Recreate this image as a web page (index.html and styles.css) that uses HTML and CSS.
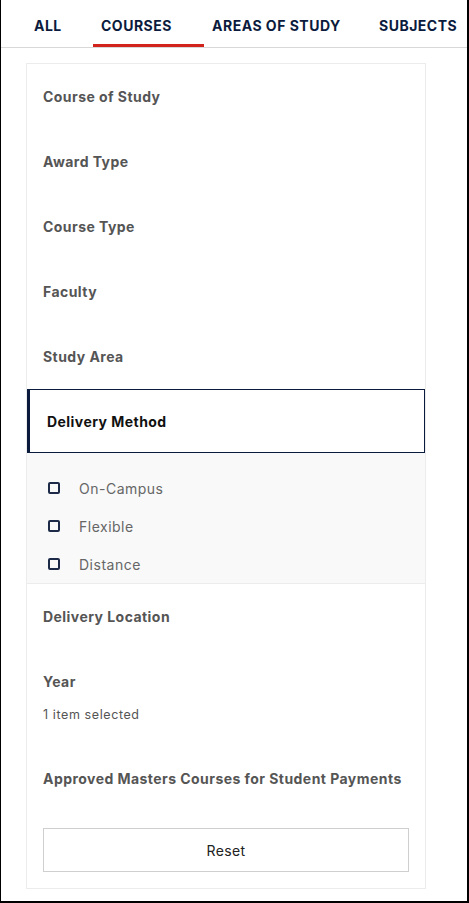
FILE: index.html
```html
<!DOCTYPE html>
<html lang="en">
<head>
<meta charset="utf-8">
<title>Course search filters</title>
<link rel="stylesheet" href="styles.css">
</head>
<body>
<div class="frame">
  <nav class="tabs">
    <a class="tab">ALL</a>
    <a class="tab active">COURSES</a>
    <a class="tab">AREAS OF STUDY</a>
    <a class="tab">SUBJECTS</a>
  </nav>
  <main class="content">
    <section class="card">
      <div class="row"><h3 class="row-title">Course of Study</h3></div>
      <div class="row"><h3 class="row-title">Award Type</h3></div>
      <div class="row"><h3 class="row-title">Course Type</h3></div>
      <div class="row"><h3 class="row-title">Faculty</h3></div>
      <div class="row"><h3 class="row-title">Study Area</h3></div>
      <div class="row open"><h3 class="row-title">Delivery Method</h3></div>
      <ul class="options">
        <li class="option"><span class="check"></span><span>On-Campus</span></li>
        <li class="option"><span class="check"></span><span>Flexible</span></li>
        <li class="option"><span class="check"></span><span>Distance</span></li>
      </ul>
      <div class="row"><h3 class="row-title">Delivery Location</h3></div>
      <div class="row"><h3 class="row-title">Year</h3><p class="row-sub">1 item selected</p></div>
      <div class="row"><h3 class="row-title">Approved Masters Courses for Student Payments</h3></div>
      <div class="actions"><button class="reset">Reset</button></div>
    </section>
  </main>
</div>
</body>
</html>
```
FILE: styles.css
```css
* { box-sizing: border-box; }
html, body { margin: 0; padding: 0; background: #fff; }
body {
  font-family: "Inter", "Noto Sans", "Liberation Sans", sans-serif;
  width: 469px;
  height: 903px;
}
.frame {
  height: 903px;
  border-left: 1px solid #000;
  border-right: 2px solid #000;
  border-bottom: 2px solid #000;
  display: flex;
  flex-direction: column;
}
.tabs {
  display: flex;
  height: 48px;
  border-bottom: 1px solid #d8d8d8;
  padding-left: 25px;
}
.tab {
  display: flex;
  align-items: center;
  font-weight: 700;
  font-size: 14px;
  color: #0b1b3d;
  padding: 6px 0 0 8px;
  height: 47px;
  border-bottom: 3px solid transparent;
  letter-spacing: 0.5px;
  white-space: nowrap;
  flex: none;
}
.tab:nth-child(1) { width: 67px; }
.tab:nth-child(2) { width: 111px; }
.tab:nth-child(3) { width: 167px; padding-left: 8px; }
.tab:nth-child(4) { width: 90px; }
.tab.active { border-bottom-color: #d1231c; }
.content {
  padding: 15px 41px 0 25px;
}
.card {
  border: 1px solid #ececec;
  display: flex;
  flex-direction: column;
  padding-bottom: 16px;
}
.row {
  padding: 24px 16px;
}
.row-title {
  margin: 0;
  font-size: 14px;
  line-height: 17px;
  font-weight: 700;
  color: #555;
  letter-spacing: 0.45px;
  white-space: nowrap;
}
.row-sub {
  margin: 17px 0 0;
  font-size: 12.5px;
  line-height: 15px;
  color: #555;
  letter-spacing: 0.6px;
}
.row.open {
  border: 1px solid #0b1b3d;
  border-left-width: 3px;
  padding: 22px 17px;
  height: 64px;
  display: flex;
  align-items: center;
}
.row.open .row-title { color: #111; }
.options {
  list-style: none;
  margin: 0;
  padding: 16px 21px 10px;
  background: #f9f9f9;
  border-bottom: 1px solid #ececec;
  height: 131px;
}
.option {
  display: flex;
  align-items: center;
  gap: 19px;
  height: 38px;
  font-size: 14px;
  color: #666;
  letter-spacing: 0.5px;
}
.check {
  width: 12px;
  height: 12px;
  border: 2px solid #1d2b48;
  border-radius: 2px;
  flex: none;
}
.actions {
  padding: 0 16px;
  margin-top: 17px;
}
.reset {
  width: 100%;
  height: 44px;
  background: #fff;
  border: 1px solid #cfcfcf;
  font-family: inherit;
  font-size: 14px;
  color: #222;
  letter-spacing: 0.4px;
}
```
